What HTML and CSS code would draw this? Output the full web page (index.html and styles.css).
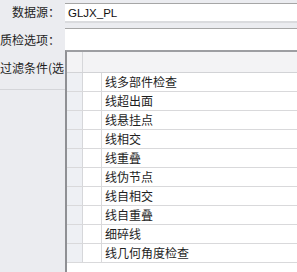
FILE: index.html
```html
<!DOCTYPE html>
<html lang="zh-CN">
<head>
  <meta charset="UTF-8">
  <title>质检设置</title>
  <link rel="stylesheet" href="styles.css">
</head>
<body>
  <div class="row row-source">
    <div class="label">数据源：</div>
    <div class="box box-source">GLJX_PL</div>
  </div>

  <div class="row row-option">
    <div class="label">质检选项：</div>
    <div class="box box-option"></div>
  </div>

  <div class="row row-filter">
    <div class="label label-filter">过滤条件(选</div>
    <div class="grid">
      <div class="grid-head">
        <div class="hcell sel"></div>
        <div class="hcell"></div>
      </div>
      <div class="grid-row"><div class="cell sel"></div><div class="cell chk"></div><div class="cell name">线多部件检查</div></div>
      <div class="grid-row"><div class="cell sel"></div><div class="cell chk"></div><div class="cell name">线超出面</div></div>
      <div class="grid-row"><div class="cell sel"></div><div class="cell chk"></div><div class="cell name">线悬挂点</div></div>
      <div class="grid-row"><div class="cell sel"></div><div class="cell chk"></div><div class="cell name">线相交</div></div>
      <div class="grid-row"><div class="cell sel"></div><div class="cell chk"></div><div class="cell name">线重叠</div></div>
      <div class="grid-row"><div class="cell sel"></div><div class="cell chk"></div><div class="cell name">线伪节点</div></div>
      <div class="grid-row"><div class="cell sel"></div><div class="cell chk"></div><div class="cell name">线自相交</div></div>
      <div class="grid-row"><div class="cell sel"></div><div class="cell chk"></div><div class="cell name">线自重叠</div></div>
      <div class="grid-row"><div class="cell sel"></div><div class="cell chk"></div><div class="cell name">细碎线</div></div>
      <div class="grid-row"><div class="cell sel"></div><div class="cell chk"></div><div class="cell name">线几何角度检查</div></div>
    </div>
  </div>
</body>
</html>
```

FILE: styles.css
```css
* {
  margin: 0;
  padding: 0;
  box-sizing: border-box;
}

body {
  font-family: "Noto Sans CJK SC", "Noto Sans", sans-serif;
  font-size: 12px;
  color: #1e1e1e;
  background-color: #ebecf0;
  width: 297px;
  height: 272px;
  overflow: hidden;
}

.row {
  display: flex;
}

.label {
  width: 65px;
  flex-shrink: 0;
  padding-right: 5px;
  text-align: right;
  white-space: nowrap;
  overflow: hidden;
  line-height: 18px;
}

.box {
  flex: 1;
  background-color: #fff;
  border-top: 1px solid #a6a6a6;
}

.row-source {
  margin-top: 3px;
  height: 20px;
}

.row-source .label {
  padding-top: 0;
}

.box-source {
  border-bottom: 2px solid #dadbde;
  font-family: "Liberation Sans", Arial, sans-serif;
  font-size: 11.5px;
  line-height: 18px;
  padding-left: 3px;
  color: #111;
}

.row-option {
  margin-top: 5px;
  height: 22px;
}

.row-option .label {
  padding-top: 3px;
}

.row-filter {
  height: 222px;
}

.label-filter {
  text-align: left;
  padding-right: 0;
  padding-top: 9px;
  height: 40px;
  border-bottom: 1px solid #d4d5d9;
}

.grid {
  flex: 1;
  background-color: #fff;
  border-top: 2px solid #9d9ea2;
  border-left: 2px solid #8f9094;
}

.grid-head {
  display: flex;
  height: 21px;
  background-color: #f3f3f5;
  border-bottom: 1px solid #d2d3d6;
}

.hcell.sel {
  width: 16px;
  border-right: 1px solid #d6d7da;
}

.grid-row {
  display: grid;
  grid-template-columns: 16px 19px 1fr;
  height: 19px;
  border-bottom: 1px solid #d9d9db;
}

.cell.sel {
  background-color: #eef0f4;
  border-right: 1px solid #d6d7da;
}

.cell.chk {
  border-right: 1px solid #d9d9db;
}

.cell.name {
  padding-left: 3px;
  line-height: 18px;
  white-space: nowrap;
}
```
